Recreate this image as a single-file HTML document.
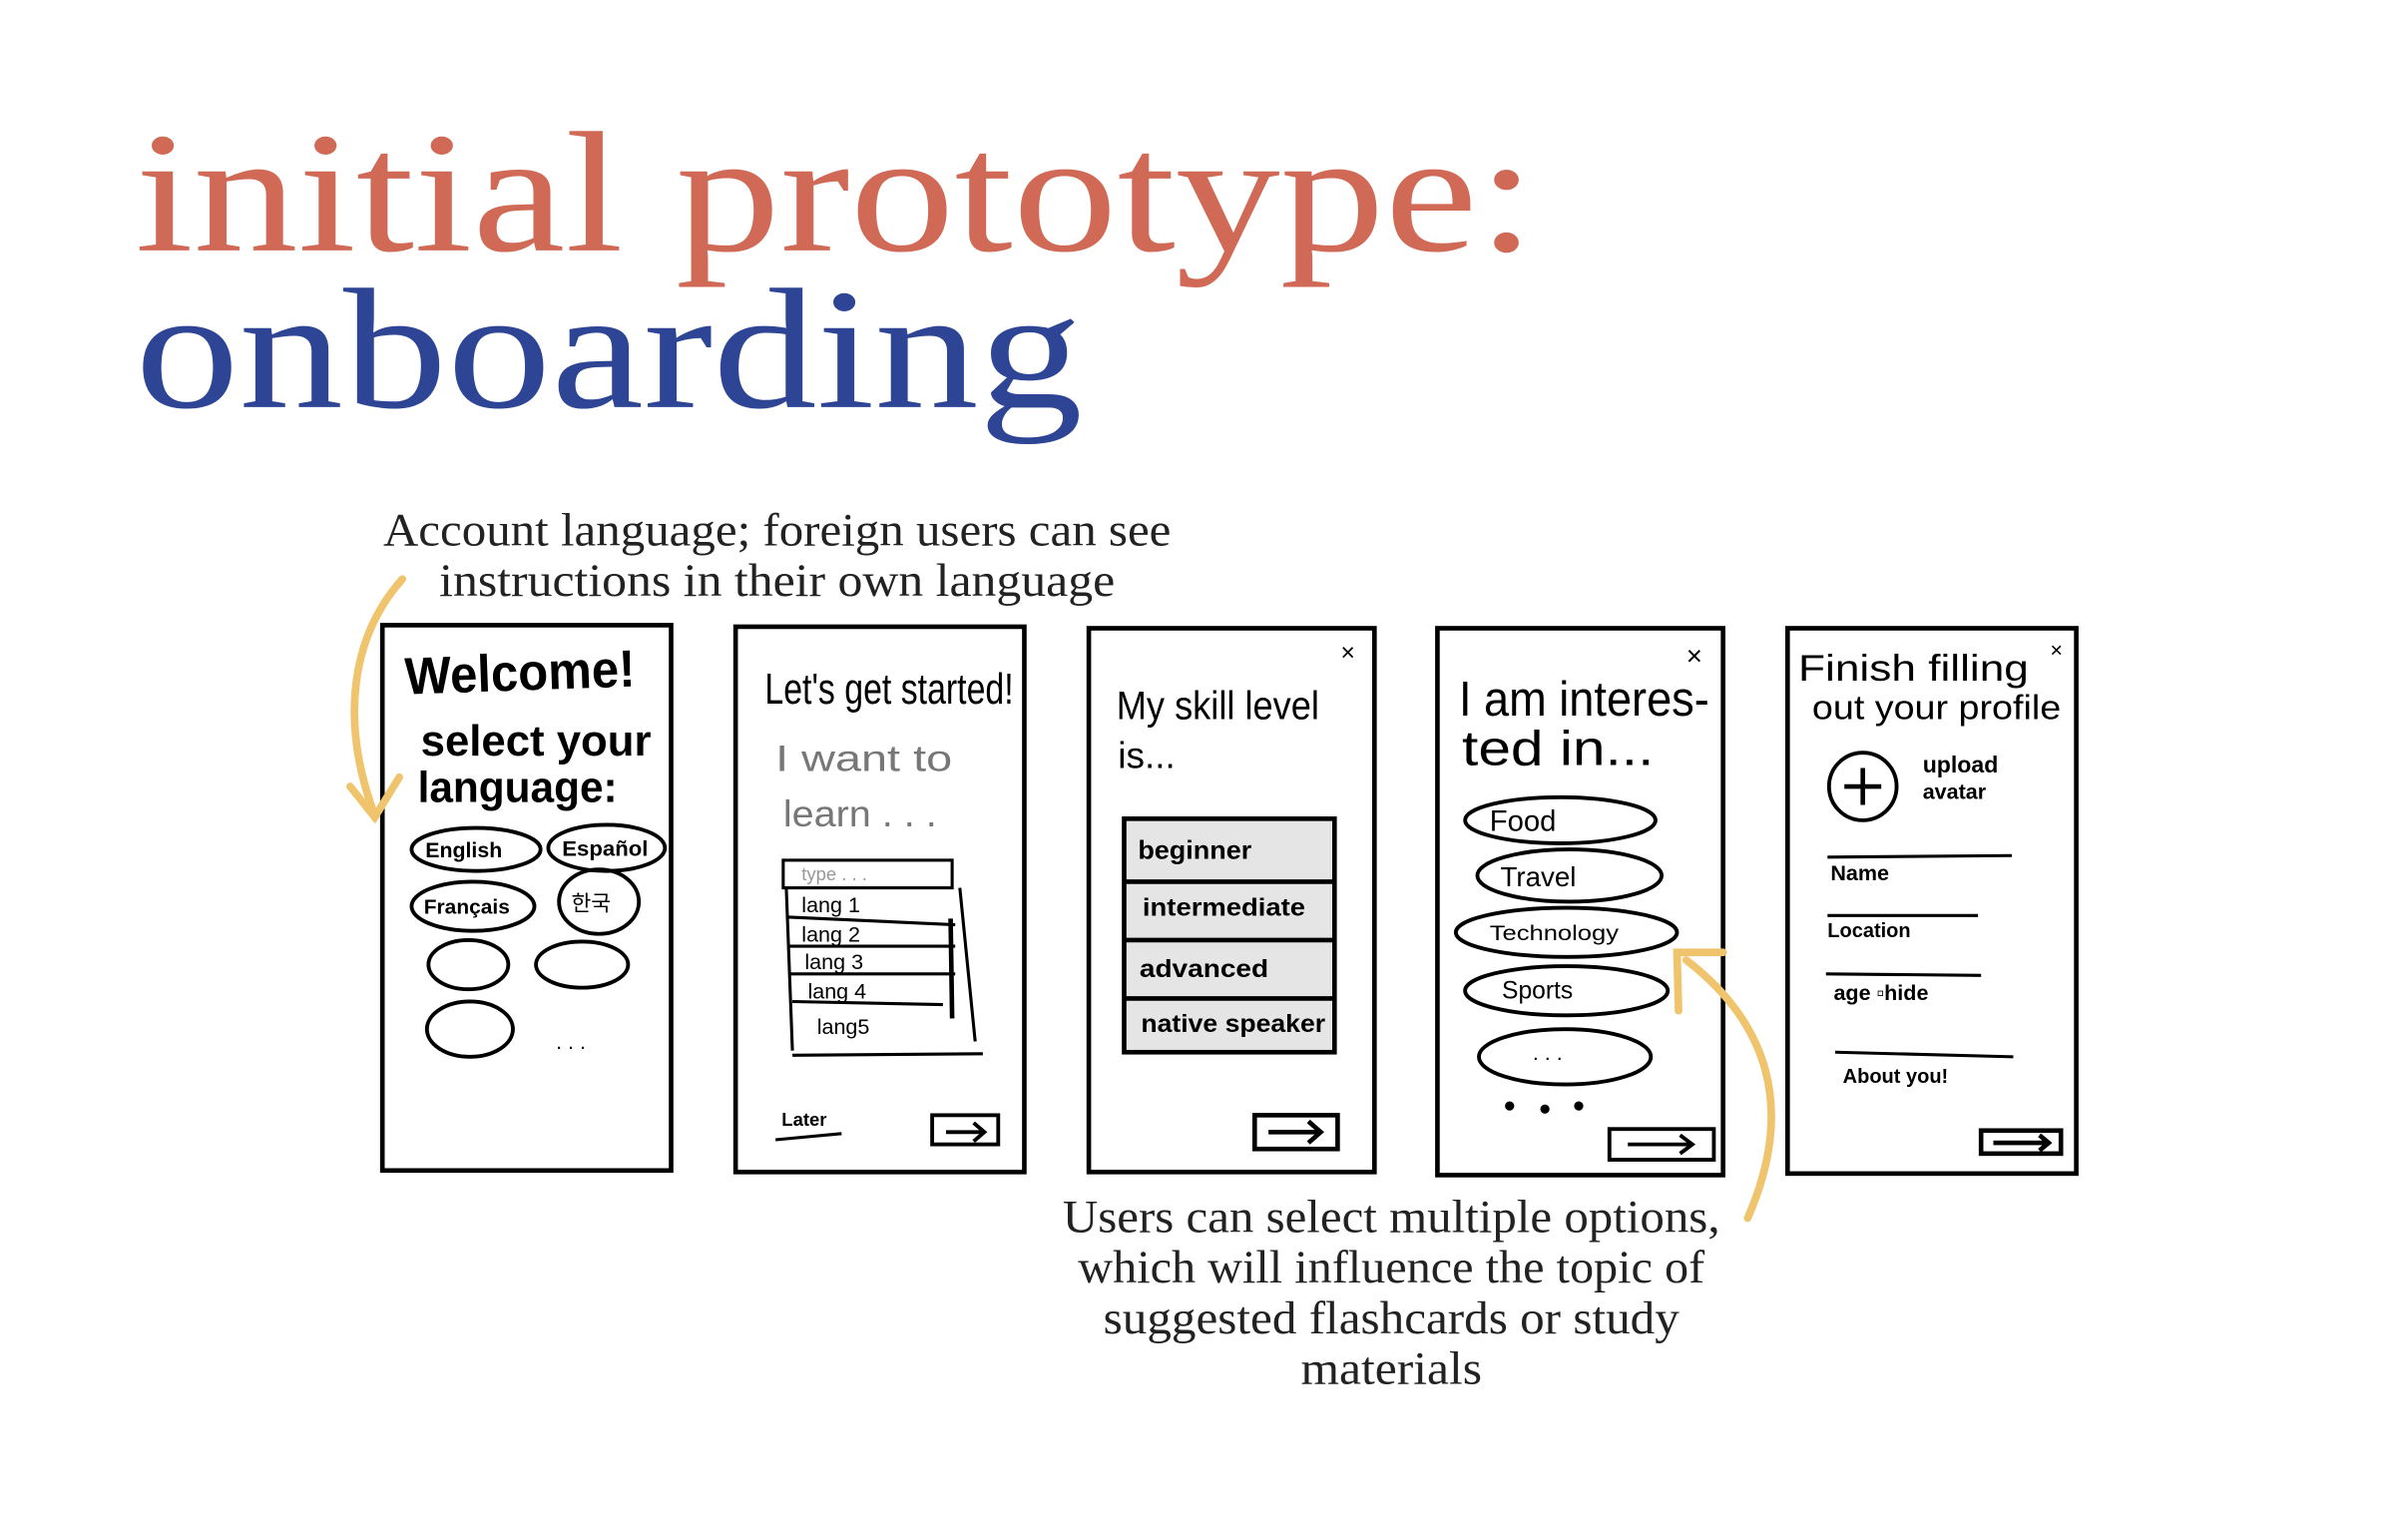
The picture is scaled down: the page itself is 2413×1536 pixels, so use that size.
<!DOCTYPE html>
<html><head><meta charset="utf-8"><style>
html,body{margin:0;padding:0;background:#fff;}
svg{display:block;}
.hw{font-family:"Liberation Sans Narrow","Liberation Sans",sans-serif;fill:#000;}
.cap{font-family:"Liberation Serif",serif;font-size:30px;fill:#222;}
</style></head><body>
<svg width="2413" height="1536" viewBox="0 0 1568 998" preserveAspectRatio="none" xmlns="http://www.w3.org/2000/svg">
<rect width="1568" height="998" fill="#fff"/>
<text x="88" y="163" font-family="Liberation Serif,serif" font-size="112" fill="#D06A56" textLength="912" lengthAdjust="spacingAndGlyphs">initial prototype:</text>
<text x="88" y="265" font-family="Liberation Serif,serif" font-size="112" fill="#2E4596" textLength="617" lengthAdjust="spacingAndGlyphs">onboarding</text>

<text class="cap" x="506" y="355" text-anchor="middle" textLength="513" lengthAdjust="spacingAndGlyphs">Account language; foreign users can see</text>
<text class="cap" x="506" y="388" text-anchor="middle" textLength="440" lengthAdjust="spacingAndGlyphs">instructions in their own language</text>
<text class="cap" x="906" y="802" text-anchor="middle" textLength="428" lengthAdjust="spacingAndGlyphs">Users can select multiple options,</text>
<text class="cap" x="906" y="835" text-anchor="middle" textLength="408" lengthAdjust="spacingAndGlyphs">which will influence the topic of</text>
<text class="cap" x="906" y="868" text-anchor="middle" textLength="375" lengthAdjust="spacingAndGlyphs">suggested flashcards or study</text>
<text class="cap" x="906" y="901" text-anchor="middle" textLength="118" lengthAdjust="spacingAndGlyphs">materials</text>

<g fill="none" stroke="#000" stroke-width="3">
<rect x="249" y="407" width="188" height="355"/>
<rect x="479" y="408" width="188" height="355"/>
<rect x="709" y="409" width="186" height="354"/>
<rect x="936" y="409" width="186" height="356"/>
<rect x="1164" y="409" width="188" height="355"/>
</g>

<!-- phone 1 -->
<text class="hw" x="264" y="452" font-size="34" font-weight="bold" textLength="150" lengthAdjust="spacingAndGlyphs" transform="rotate(-2 264 452)">Welcome!</text>
<text class="hw" x="274" y="492" font-size="28" font-weight="bold" textLength="150" lengthAdjust="spacingAndGlyphs">select your</text>
<text class="hw" x="272" y="522" font-size="28" font-weight="bold" textLength="130" lengthAdjust="spacingAndGlyphs">language:</text>
<g fill="none" stroke="#000" stroke-width="2.5">
<ellipse cx="310" cy="553" rx="42" ry="14"/>
<ellipse cx="395" cy="552" rx="38" ry="15"/>
<ellipse cx="308" cy="590" rx="40" ry="16"/>
<ellipse cx="390" cy="587" rx="26" ry="21"/>
<ellipse cx="305" cy="628" rx="26" ry="16"/>
<ellipse cx="379" cy="628" rx="30" ry="15"/>
<ellipse cx="306" cy="670" rx="28" ry="18"/>
</g>
<text class="hw" x="277" y="558" font-size="14" font-weight="bold" textLength="50" lengthAdjust="spacingAndGlyphs">English</text>
<text class="hw" x="366" y="557" font-size="14" font-weight="bold" textLength="56" lengthAdjust="spacingAndGlyphs">Español</text>
<text class="hw" x="276" y="595" font-size="13" font-weight="bold" textLength="56" lengthAdjust="spacingAndGlyphs">Français</text>
<text x="372" y="593" font-size="14" font-family="Noto Sans CJK KR,sans-serif">한국</text>
<text class="hw" x="362" y="683" font-size="14">. . .</text>

<!-- phone 2 -->
<text class="hw" x="498" y="458" font-size="28" textLength="162" lengthAdjust="spacingAndGlyphs">Let's get started!</text>
<text class="hw" x="505" y="502" font-size="24" style="fill:#777" textLength="115" lengthAdjust="spacingAndGlyphs">I want to</text>
<text class="hw" x="510" y="538" font-size="24" style="fill:#777" textLength="100" lengthAdjust="spacingAndGlyphs">learn . . .</text>
<g fill="none" stroke="#000" stroke-width="2">
<rect x="510" y="560" width="110" height="18"/>
<line x1="512" y1="597" x2="622" y2="602"/>
<line x1="514" y1="616" x2="622" y2="616"/>
<line x1="515" y1="634" x2="622" y2="634"/>
<line x1="516" y1="652" x2="614" y2="654"/>
<line x1="512" y1="578" x2="516" y2="684"/>
<line x1="625" y1="578" x2="635" y2="678"/>
<line x1="619" y1="598" x2="620" y2="663" stroke-width="3"/>
<line x1="516" y1="687" x2="640" y2="686"/>
</g>
<text class="hw" x="522" y="573" font-size="12" style="fill:#999">type . . .</text>
<text class="hw" x="522" y="594" font-size="14">lang 1</text>
<text class="hw" x="522" y="613" font-size="14">lang 2</text>
<text class="hw" x="524" y="631" font-size="14">lang 3</text>
<text class="hw" x="526" y="650" font-size="14">lang 4</text>
<text class="hw" x="532" y="673" font-size="14">lang5</text>
<text class="hw" x="509" y="733" font-size="12" font-weight="bold">Later</text>
<line x1="505" y1="742" x2="548" y2="738" stroke="#000" stroke-width="2"/>
<g fill="none" stroke="#000" stroke-width="2.5"><rect x="607" y="726" width="43" height="19"/><path d="M616 737h24M634 731l7 6-7 6"/></g>

<!-- phone 3 -->
<text class="hw" x="873" y="430" font-size="16">×</text>
<text class="hw" x="727" y="468" font-size="26" textLength="132" lengthAdjust="spacingAndGlyphs">My skill level</text>
<text class="hw" x="728" y="500" font-size="24">is...</text>
<g stroke="#000" stroke-width="3" fill="#E5E5E5">
<rect x="732" y="533" width="137" height="152"/>
<line x1="732" y1="574" x2="869" y2="574"/>
<line x1="732" y1="612" x2="869" y2="612"/>
<line x1="732" y1="650" x2="869" y2="650"/>
</g>
<text class="hw" x="741" y="559" font-size="17" font-weight="bold" textLength="74" lengthAdjust="spacingAndGlyphs">beginner</text>
<text class="hw" x="744" y="596" font-size="16" font-weight="bold" textLength="106" lengthAdjust="spacingAndGlyphs">intermediate</text>
<text class="hw" x="742" y="636" font-size="16" font-weight="bold" textLength="84" lengthAdjust="spacingAndGlyphs">advanced</text>
<text class="hw" x="743" y="672" font-size="16" font-weight="bold" textLength="120" lengthAdjust="spacingAndGlyphs">native speaker</text>
<g fill="none" stroke="#000" stroke-width="3"><rect x="817" y="726" width="54" height="22"/><path d="M826 737h34M852 730l8 7-8 7"/></g>

<!-- phone 4 -->
<text class="hw" x="1098" y="433" font-size="18">×</text>
<text class="hw" x="950" y="466" font-size="32" textLength="163" lengthAdjust="spacingAndGlyphs">I am interes-</text>
<text class="hw" x="952" y="498" font-size="32" textLength="125" lengthAdjust="spacingAndGlyphs">ted in...</text>
<g fill="none" stroke="#000" stroke-width="2.5">
<ellipse cx="1016" cy="534" rx="62" ry="15"/>
<ellipse cx="1022" cy="570" rx="60" ry="17"/>
<ellipse cx="1020" cy="607" rx="72" ry="16"/>
<ellipse cx="1020" cy="645" rx="66" ry="16"/>
<ellipse cx="1019" cy="688" rx="56" ry="18"/>
<rect x="1048" y="735" width="68" height="20"/><path d="M1060 745h42M1094 739l8 6-8 6"/>
</g>
<text class="hw" x="970" y="541" font-size="19">Food</text>
<text class="hw" x="977" y="577" font-size="18">Travel</text>
<text class="hw" x="970" y="612" font-size="14" textLength="84" lengthAdjust="spacingAndGlyphs">Technology</text>
<text class="hw" x="978" y="650" font-size="16">Sports</text>
<text class="hw" x="998" y="690" font-size="14">. . .</text>
<g fill="#000"><circle cx="983" cy="720" r="3"/><circle cx="1006" cy="722" r="3"/><circle cx="1028" cy="720" r="3"/></g>

<!-- phone 5 -->
<text class="hw" x="1335" y="428" font-size="14">×</text>
<text class="hw" x="1171" y="443" font-size="24" textLength="150" lengthAdjust="spacingAndGlyphs">Finish filling</text>
<text class="hw" x="1180" y="468" font-size="22" textLength="162" lengthAdjust="spacingAndGlyphs">out your profile</text>
<g fill="none" stroke="#000" stroke-width="2.5"><circle cx="1213" cy="512" r="22"/><path d="M1213 500v24M1201 512h24" stroke-width="3"/></g>
<text class="hw" x="1252" y="503" font-size="15" font-weight="bold">upload</text>
<text class="hw" x="1252" y="520" font-size="14" font-weight="bold">avatar</text>
<g stroke="#000" stroke-width="2">
<line x1="1190" y1="558" x2="1310" y2="557"/>
<line x1="1190" y1="596" x2="1288" y2="596"/>
<line x1="1189" y1="634" x2="1290" y2="635"/>
<line x1="1195" y1="685" x2="1311" y2="688"/>
</g>
<text class="hw" x="1192" y="573" font-size="14" font-weight="bold">Name</text>
<text class="hw" x="1190" y="610" font-size="13" font-weight="bold">Location</text>
<text class="hw" x="1194" y="651" font-size="14" font-weight="bold">age  ▫hide</text>
<text class="hw" x="1200" y="705" font-size="13" font-weight="bold">About you!</text>
<g fill="none" stroke="#000" stroke-width="3"><rect x="1290" y="736" width="52" height="15"/><path d="M1298 744h36M1328 739l6 5-6 5"/></g>

<!-- arrows -->
<g fill="none" stroke="#F0C46C" stroke-width="5" stroke-linecap="round">
<path d="M262 377 C 228 415, 222 470, 243 528"/>
<path d="M228 512 L244 532 L260 506"/>
<path d="M1138 793 C 1170 720, 1150 665, 1098 625"/>
<path d="M1093 658 L1092 620 L1122 620"/>
</g>
</svg>
</body></html>
